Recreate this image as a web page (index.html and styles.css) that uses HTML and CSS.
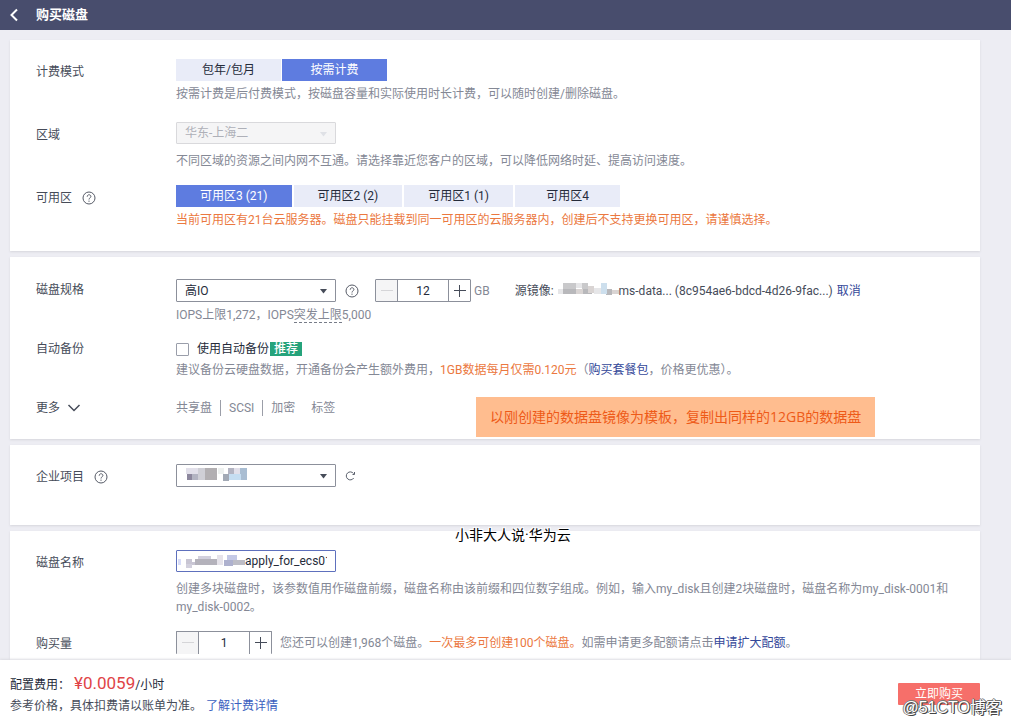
FILE: index.html
```html
<!DOCTYPE html>
<html lang="zh-CN">
<head>
<meta charset="utf-8">
<title>购买磁盘</title>
<link rel="stylesheet" href="styles.css">
</head>
<body>
<header class="topbar">
  <button class="back" type="button" aria-label="返回"><svg width="10" height="14" viewBox="0 0 10 14"><path d="M8 1.500 2.500 7 8 12.500" fill="none" stroke="#fff" stroke-width="2"/></svg></button>
  <h1 class="title">购买磁盘</h1>
</header>

<main class="content">
  <section class="card">
    <div class="row">
      <div class="label">计费模式</div>
      <div class="field">
        <div class="tabs tabs-joined">
          <button class="tab" type="button">包年/包月</button>
          <button class="tab active" type="button">按需计费</button>
        </div>
        <p class="help">按需计费是后付费模式，按磁盘容量和实际使用时长计费，可以随时创建/删除磁盘。</p>
      </div>
    </div>
    <div class="row">
      <label class="label" for="region">区域</label>
      <div class="field">
        <div class="select disabled">
          <select id="region" disabled><option>华东-上海二</option></select>
          <svg class="caret" width="7" height="5" viewBox="0 0 7 5"><path d="M0 0h7L3.500 4.500z"/></svg>
        </div>
        <p class="help help-far">不同区域的资源之间内网不互通。请选择靠近您客户的区域，可以降低网络时延、提高访问速度。</p>
      </div>
    </div>
    <div class="row row-tight">
      <div class="label">可用区
        <svg class="hint" width="14" height="14" viewBox="0 0 14 14"><circle cx="7" cy="7" r="6"/><path d="M5.200 5.700c0-2.600 3.700-2.500 3.700-.2C8.900 6.900 7 6.800 7 8.500M7 9.600v1.200"/></svg>
      </div>
      <div class="field">
        <div class="tabs">
          <button class="tab active" type="button">可用区3 (21)</button>
          <button class="tab" type="button">可用区2 (2)</button>
          <button class="tab" type="button">可用区1 (1)</button>
          <button class="tab" type="button">可用区4</button>
        </div>
        <p class="help warn">当前可用区有21台云服务器。磁盘只能挂载到同一可用区的云服务器内，创建后不支持更换可用区，请谨慎选择。</p>
      </div>
    </div>
  </section>

  <section class="card card-spec">
    <div class="row">
      <label class="label label-flush" for="spec">磁盘规格</label>
      <div class="field">
        <div class="line">
          <div class="select">
            <select id="spec"><option>高IO</option></select>
            <svg class="caret" width="7" height="5" viewBox="0 0 7 5"><path d="M0 0h7L3.500 4.500z"/></svg>
          </div>
          <svg class="hint hint-select" width="14" height="14" viewBox="0 0 14 14"><circle cx="7" cy="7" r="6"/><path d="M5.200 5.700c0-2.600 3.700-2.500 3.700-.2C8.900 6.900 7 6.800 7 8.500M7 9.600v1.200"/></svg>
          <div class="stepper">
            <button class="step off" type="button" aria-label="减少容量" disabled><svg width="12" height="12" viewBox="0 0 12 12"><path d="M0 5.500h12"/></svg></button>
            <input class="step-value" type="text" value="12" aria-label="容量">
            <button class="step" type="button" aria-label="增加容量"><svg width="12" height="12" viewBox="0 0 12 12"><path d="M0 5.500h12M5.500 0v12"/></svg></button>
          </div>
          <span class="unit">GB</span>
          <div class="source">
            <span>源镜像:</span>
            <svg class="source-mask" width="61" height="16" viewBox="0 0 61 16" shape-rendering="crispEdges">
              <path fill="#e6e6e8" d="M0 6h6v5H0zM18 0h7v5h-7zM36 5h7v6h-7z"/><path fill="#c9c9cb" d="M5 0h13v6H5zM24 0h6v6h-6z"/><path fill="#b8b8bb" d="M5 6h13v5H5zM25 6h9v5h-9zM48 6h6v6h-6z"/><path fill="#d9d4d3" d="M18 6h7v5h-7zM30 3h6v7h-6zM54 7h7v4h-7z"/><path fill="#cddfed" d="M43 0h6v11h-6z"/>
            </svg>
            <span>ms-data... (8c954ae6-bdcd-4d26-9fac...)</span>
            <a class="link cancel" href="#">取消</a>
          </div>
        </div>
        <p class="help">IOPS上限1,272，IOPS<span class="term">突发上限</span>5,000</p>
      </div>
    </div>
    <div class="row row-backup">
      <div class="label label-line">自动备份</div>
      <div class="field">
        <div class="backup">
          <input class="check" id="backup" type="checkbox">
          <label for="backup">使用自动备份</label><span class="badge">推荐</span>
        </div>
        <p class="help">建议备份云硬盘数据，开通备份会产生额外费用，<span class="warn">1GB数据每月仅需0.120元</span>（<a class="link" href="#">购买套餐包</a>，价格更优惠）。</p>
      </div>
    </div>
    <div class="row row-more">
      <div class="label label-line label-more">更多
        <svg class="chevron" width="14" height="8" viewBox="0 0 14 8"><path d="M1.500 1 7 6.500 12.500 1" fill="none" stroke="#464c59" stroke-width="1.500"/></svg>
      </div>
      <div class="field extras">
        <span class="extra">共享盘</span><span class="extra divided">SCSI</span><span class="extra divided">加密</span><span class="extra">标签</span>
      </div>
    </div>
    <div class="note">以刚创建的数据盘镜像为模板，复制出同样的12GB的数据盘</div>
  </section>

  <section class="card card-project">
    <div class="row">
      <label class="label" for="project">企业项目
        <svg class="hint" width="14" height="14" viewBox="0 0 14 14"><circle cx="7" cy="7" r="6"/><path d="M5.200 5.700c0-2.600 3.700-2.500 3.700-.2C8.900 6.900 7 6.800 7 8.500M7 9.600v1.200"/></svg>
      </label>
      <div class="field line">
        <div class="select">
          <select id="project"><option></option></select>
          <svg class="mask" width="62" height="16" viewBox="0 0 62 16" shape-rendering="crispEdges">
            <path fill="#e2e0ea" d="M0 1h12v6H0zM48 1h6v6h-6z"/><path fill="#8c879d" d="M1 7h5v6H1z"/><path fill="#b3b4c2" d="M6 7h6v6H6zM42 1h6v6h-6z"/><path fill="#cfcfd6" d="M12 7h7v6h-7zM12 1h7v6h-7z"/><path fill="#b2afb2" d="M19 1h12v12H19z"/><path fill="#edf0ef" d="M32 1h6v6h-6z"/><path fill="#a2a9b5" d="M37 7h6v7h-6z"/><path fill="#c5ddf1" d="M43 7h12v6H43z"/><path fill="#a9bdd2" d="M55 7h6v6h-6zM54 1h7v6h-7z"/>
          </svg>
          <svg class="caret" width="7" height="5" viewBox="0 0 7 5"><path d="M0 0h7L3.500 4.500z"/></svg>
        </div>
        <button class="refresh" type="button" aria-label="刷新"><svg width="11" height="10" viewBox="0 0 11 10"><path d="M8.500 2.500A4 4 0 1 0 8.700 7M9.500 1v2.500H7.500" fill="none" stroke="#5a606c" stroke-width="1"/></svg></button>
      </div>
    </div>
  </section>

  <section class="card card-name">
    <div class="row">
      <label class="label" for="name">磁盘名称</label>
      <div class="field">
        <div class="namebox">
          <input class="name" id="name" type="text" value="apply_for_ecs01">
          <svg class="name-mask" width="68" height="18" viewBox="0 0 68 18" shape-rendering="crispEdges">
            <path fill="#d8ddf8" d="M1 7h3v6H1z"/><path fill="#c8c5d3" d="M9 7h6v5H9zM15 10h6v3h-6z"/><path fill="#b4b2bb" d="M18 7h22v6H18z"/><path fill="#d2d0dd" d="M21 4h13v3H21zM9 12h6v4H9z"/><path fill="#e6e3ea" d="M40 3h6v10h-6z"/><path fill="#aeb1ce" d="M47 8h9v6h-9z"/><path fill="#c4c9e6" d="M50 3h10v5H50z"/><path fill="#bdbdc6" d="M56 8h12v5H56z"/>
          </svg>
        </div>
        <p class="help help-far">创建多块磁盘时，该参数值用作磁盘前缀，磁盘名称由该前缀和四位数字组成。例如，输入my_disk且创建2块磁盘时，磁盘名称为my_disk-0001和my_disk-0002。</p>
      </div>
    </div>
    <div class="row row-tight">
      <label class="label" for="count">购买量</label>
      <div class="field line">
        <div class="stepper open">
          <button class="step off" type="button" aria-label="减少数量" disabled><svg width="12" height="12" viewBox="0 0 12 12"><path d="M0 5.500h12"/></svg></button>
          <input class="step-value" id="count" type="text" value="1">
          <button class="step" type="button" aria-label="增加数量"><svg width="12" height="12" viewBox="0 0 12 12"><path d="M0 5.500h12M5.500 0v12"/></svg></button>
        </div>
        <span class="quota">您还可以创建1,968个磁盘。<span class="warn">一次最多可创建100个磁盘。</span>如需申请更多配额请点击<a class="link" href="#">申请扩大配额</a>。</span>
      </div>
    </div>
    <div class="stamp">小非大人说·华为云</div>
  </section>
</main>

<footer class="footer">
  <div>
    <div class="fee">配置费用：<strong class="price">¥0.0059</strong>/小时</div>
    <div class="fee-note">参考价格，具体扣费请以账单为准。<a class="link bright" href="#">了解计费详情</a></div>
  </div>
  <button class="buy" type="button">立即购买</button>
  <div class="credit">@51CTO博客</div>
</footer>
</body>
</html>
```
FILE: styles.css
```css
* { box-sizing: border-box; }

body {
  margin: 0;
  height: 100vh;
  display: flex;
  flex-direction: column;
  overflow: hidden;
  background: #ededf3;
  color: #464c59;
  font: 12px/18px Roboto, "Noto Sans CJK SC", sans-serif;
}

button, input, select { font: inherit; color: inherit; margin: 0; padding: 0; }
button { border: 0; background: none; }
p { margin: 0; }

.topbar {
  flex: none;
  display: flex;
  align-items: center;
  gap: 17px;
  height: 30px;
  padding-left: 9px;
  background: #484d6d;
  color: #fff;
}
.back { display: flex; }
.title { margin: 0; font-size: 13px; line-height: 20px; font-weight: 700; }

.content {
  flex: 1;
  min-height: 0;
  overflow: hidden;
  display: flex;
  flex-direction: column;
  gap: 6px;
  padding: 10px 31px 0 10px;
}
.card {
  position: relative;
  flex: none;
  padding: 19px 26px 22px;
  background: #fff;
  box-shadow: 0 1px 2px #d6d6dc;
}
.card-spec { padding-top: 22px; }
.card-project { padding-bottom: 38px; }
.card-name { flex: 1 0 auto; }

.row { display: grid; grid-template-columns: 140px 1fr; }
.row + .row { margin-top: 19px; }
.row + .row-tight { margin-top: 15px; }
.row + .row-backup { margin-top: 16px; }
.row + .row-more { margin-top: 20px; }
.label { display: flex; align-items: center; gap: 10px; height: 18px; margin-top: 4px; }
.label-flush { margin-top: 2px; }
.label-line { margin-top: 0; }
.label-more { gap: 7px; }
.help { margin-top: 4px; color: #848895; }
.help-far { margin-top: 8px; }
.warn, .help.warn { color: #eb7840; }
.link { color: #344899; text-decoration: none; }
.link.bright { margin-left: 4px; color: #3b5fc0; }
.line { display: flex; align-items: center; }

.hint { fill: none; stroke: #555a66; stroke-width: 1; }
.hint-select { margin: 0 16px 0 9px; }

.tabs { display: flex; gap: 2px; }
.tabs-joined { gap: 1px; }
.tab {
  min-width: 105px;
  height: 22px;
  padding: 0 24px;
  background: #e9ecf8;
  color: #252b3a;
}
.tab.active { background: #5e7ce0; color: #fff; }

.select { position: relative; width: 160px; height: 23px; }
.select select {
  width: 100%;
  height: 100%;
  padding: 0 24px 0 8px;
  appearance: none;
  border: 1px solid #8c909b;
  border-radius: 1px;
  background: #fff;
  color: #252b3a;
  opacity: 1;
}
.caret { position: absolute; right: 9px; top: 10px; fill: #464c59; }
.select.disabled { height: 22px; }
.disabled select { border-color: #d9d9dc; background: #f5f5f6; color: #aeb0b8; }
.disabled .caret { fill: #dfe1e6; }
.mask { position: absolute; left: 10px; top: 3px; }

.stepper { display: flex; height: 23px; border: 1px solid #8c909b; border-radius: 1px; }
.step { display: flex; align-items: center; justify-content: center; width: 21px; }
.step path { fill: none; stroke: #464c59; stroke-width: 1; }
.step.off { background: #f5f5f6; }
.step.off path { stroke: #d5d5d8; }
.step-value {
  width: 52px;
  border: solid #8c909b;
  border-width: 0 1px;
  background: #fff;
  color: #252b3a;
  text-align: center;
}
.stepper.open { border-bottom: 0; }
.unit { margin-left: 3px; color: #848895; }
.source { display: flex; align-items: center; margin-left: 25px; }
.source-mask { margin-left: 4px; }
.cancel { margin-left: 4px; }
.term { border-bottom: 1px dashed #777c88; }

.backup { display: flex; align-items: center; height: 18px; color: #252b3a; }
.check {
  width: 13px;
  height: 13px;
  margin-right: 8px;
  appearance: none;
  border: 1px solid #9a9eaa;
  border-radius: 1px;
  background: #fff;
}
.badge { margin-left: 1px; padding: 0 4px; background: #25a37b; color: #fff; line-height: 14px; font-weight: 500; }
.backup + .help { margin-top: 3px; }

.extras { display: flex; color: #848895; line-height: 16px; height: 18px; align-items: center; }
.extra { padding-right: 8px; }
.divided { padding-left: 8px; border-left: 1px solid #9b9ea8; }
.divided + .extra:not(.divided) { padding-left: 8px; }

.note {
  position: absolute;
  left: 466px;
  bottom: 2px;
  padding: 10px 14px;
  background: #ffbd8f;
  color: #ee5a18;
  font: 14px/20px "Open Sans", "Noto Sans CJK SC", sans-serif;
}
.stamp {
  position: absolute;
  left: 445px;
  top: -6px;
  color: #000;
  font-size: 14px;
  line-height: 20px;
  text-shadow: 1px 1px #fff, -1px -1px #fff, 1px -1px #fff, -1px 1px #fff;
}

.refresh { display: flex; margin-left: 9px; }
.namebox { position: relative; width: 160px; height: 22px; }
.name {
  width: 100%;
  height: 100%;
  padding: 0 8px 0 68px;
  border: 1px solid #5e70bd;
  border-radius: 1px;
  background: #fff;
  color: #252b3a;
}
.name-mask { position: absolute; left: 1px; top: 2px; }
.quota { margin-left: 8px; color: #848895; }

.footer {
  position: relative;
  flex: none;
  display: flex;
  align-items: center;
  justify-content: space-between;
  padding: 13px 31px 9px 10px;
  background: #fff;
  box-shadow: 0 -1px 2px #dcdce2;
}
.fee { line-height: 22px; color: #252b3a; }
.fee-note { line-height: 20px; }
.price { margin-left: 4px; font-size: 17px; line-height: 20px; font-weight: 400; color: #e04447; }
.buy {
  width: 82px;
  height: 22px;
  margin-bottom: 2px;
  background: #f66f6a;
  border-radius: 1px;
  color: #fff;
}
.credit {
  position: absolute;
  right: 9px;
  bottom: 7px;
  color: #fff;
  font: 16px/20px "Liberation Sans", "Noto Sans CJK SC", sans-serif;
  text-shadow: 1px 1px #444, -1px 0 #777, 0 -1px #777, 1px 0 #555;
}
```
